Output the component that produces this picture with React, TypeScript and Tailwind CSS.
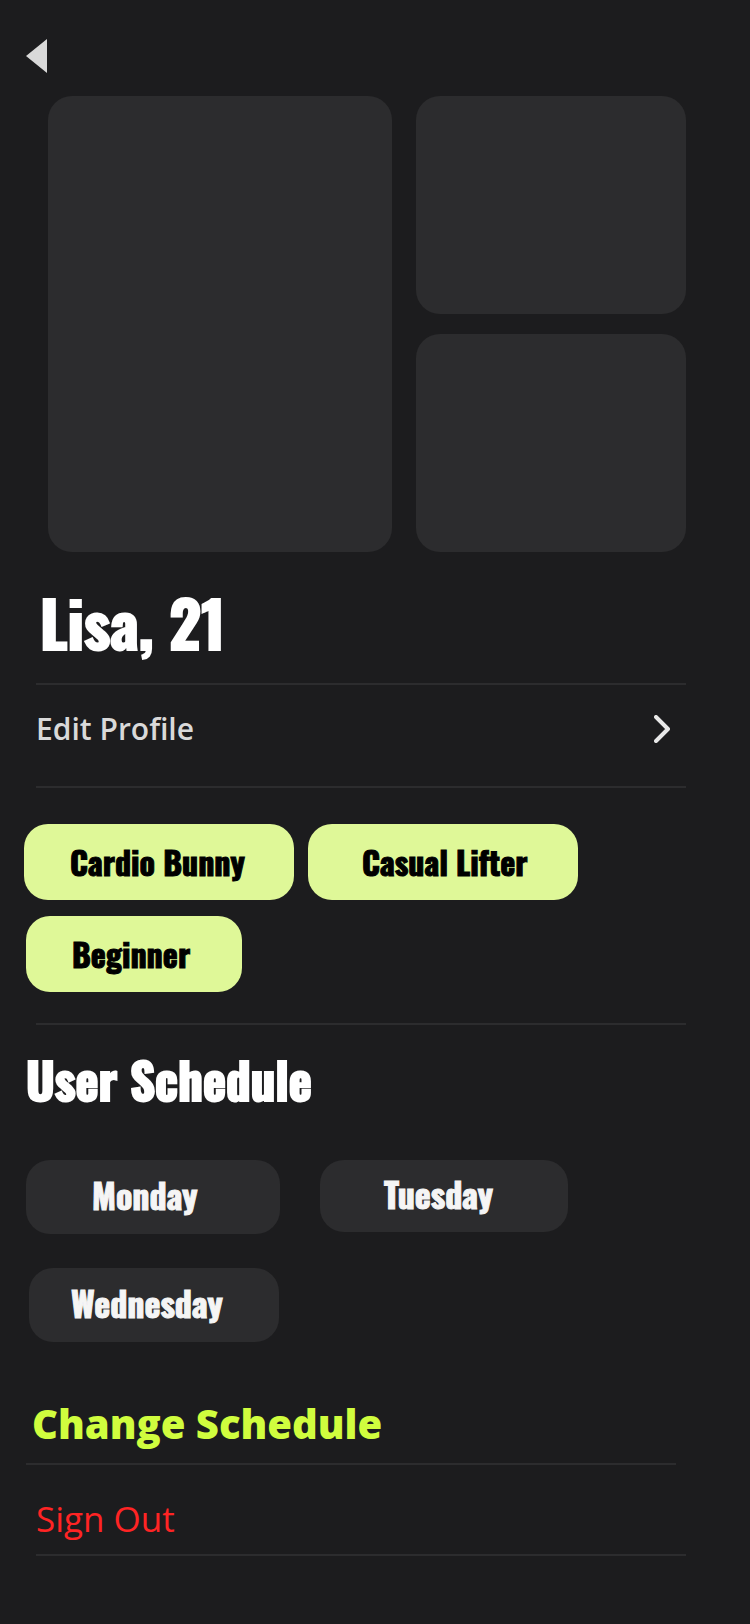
import type { ReactNode } from 'react';

const display = 'font-["Impact","Oswald",sans-serif] font-bold';
const body = 'font-["Open_Sans","Noto_Sans",sans-serif]';

const tagStyle = `flex h-[76px] items-center rounded-3xl bg-[#dff898] text-[32px] leading-10 text-black [-webkit-text-stroke:1px_currentColor] ${display}`;
const dayStyle = `flex items-center rounded-3xl bg-[#2c2c2e] pb-1 text-[34px] leading-10 text-[#f5f5f5] [-webkit-text-stroke:1px_currentColor] ${display}`;

function Tag({ className, children }: { className: string; children: ReactNode }) {
  return <li className={`${tagStyle} ${className}`}>{children}</li>;
}

function Day({ className, children }: { className: string; children: ReactNode }) {
  return <li className={`${dayStyle} ${className}`}>{children}</li>;
}

function Divider({ className = 'ml-9 mr-16' }: { className?: string }) {
  return <hr className={`h-0.5 border-0 bg-[#2c2c2e] ${className}`} />;
}

export default function App() {
  return (
    <main className={`min-h-screen bg-[#1c1c1e] pb-[68px] text-white ${body}`}>
      <header className="flex h-24 items-center px-[26px] pt-4">
        <button type="button" aria-label="Back" className="block">
          <svg width="22" height="34" viewBox="0 0 22 34" fill="#d9d9d9" aria-hidden="true">
            <path d="M0 17 21 0v34Z" />
          </svg>
        </button>
      </header>

      <section aria-label="Photos" className="ml-12 mr-16 grid h-[456px] grid-cols-[344fr_270fr] grid-rows-2 gap-x-6 gap-y-5">
        <div className="row-span-2 rounded-3xl bg-[#2c2c2e]" />
        <div className="rounded-3xl bg-[#2c2c2e]" />
        <div className="rounded-3xl bg-[#2c2c2e]" />
      </section>

      <h1 className={`flex h-[131px] items-center px-10 pt-4 pb-2 text-[62px] leading-[80px] [-webkit-text-stroke:2px_currentColor] ${display}`}>Lisa, 21</h1>
      <Divider />
      <a href="#edit" className="ml-9 mr-16 flex h-[101px] items-center justify-between pr-4 pb-3.5 text-[30px] leading-10 font-semibold text-[#d9d9d9]">
        Edit Profile
        <svg width="16" height="28" viewBox="0 0 16 28" fill="none" stroke="#e8e8e8" strokeWidth="4" strokeLinecap="round" strokeLinejoin="round" aria-hidden="true">
          <path d="M2 2 14 14 2 26" />
        </svg>
      </a>
      <Divider />

      <ul className="flex flex-wrap gap-x-3.5 gap-y-4 pt-9 pr-16 pb-[31px] pl-6">
        <Tag className="w-[270px] pl-[46px]">Cardio Bunny</Tag>
        <Tag className="w-[270px] pl-[54px]">Casual Lifter</Tag>
        <Tag className="ml-0.5 w-[216px] pl-[46px]">Beginner</Tag>
      </ul>
      <Divider />

      <h2 className={`flex h-[135px] items-center px-[26px] pb-7 text-[49px] leading-[60px] [-webkit-text-stroke:2px_currentColor] ${display}`}>User Schedule</h2>
      <ul className="flex flex-wrap items-start gap-x-10 gap-y-[34px] pr-16 pl-[26px]">
        <Day className="h-[74px] w-[254px] pl-[66px]">Monday</Day>
        <Day className="h-[72px] w-[248px] pl-16">Tuesday</Day>
        <Day className="ml-[3px] h-[74px] w-[250px] pl-[42px]">Wednesday</Day>
      </ul>

      <div className="flex h-[121px] items-end px-8 pb-3">
        <button type="button" className="text-[40px] leading-[54px] font-extrabold text-[#d0fd3e]">
          Change Schedule
        </button>
      </div>
      <Divider className="ml-[26px] mr-[74px]" />
      <div className="flex h-[89px] items-center px-9 pt-[18px]">
        <button type="button" className="text-[35px] leading-[46px] text-[#ff2424]">
          Sign Out
        </button>
      </div>
      <Divider />
    </main>
  );
}
